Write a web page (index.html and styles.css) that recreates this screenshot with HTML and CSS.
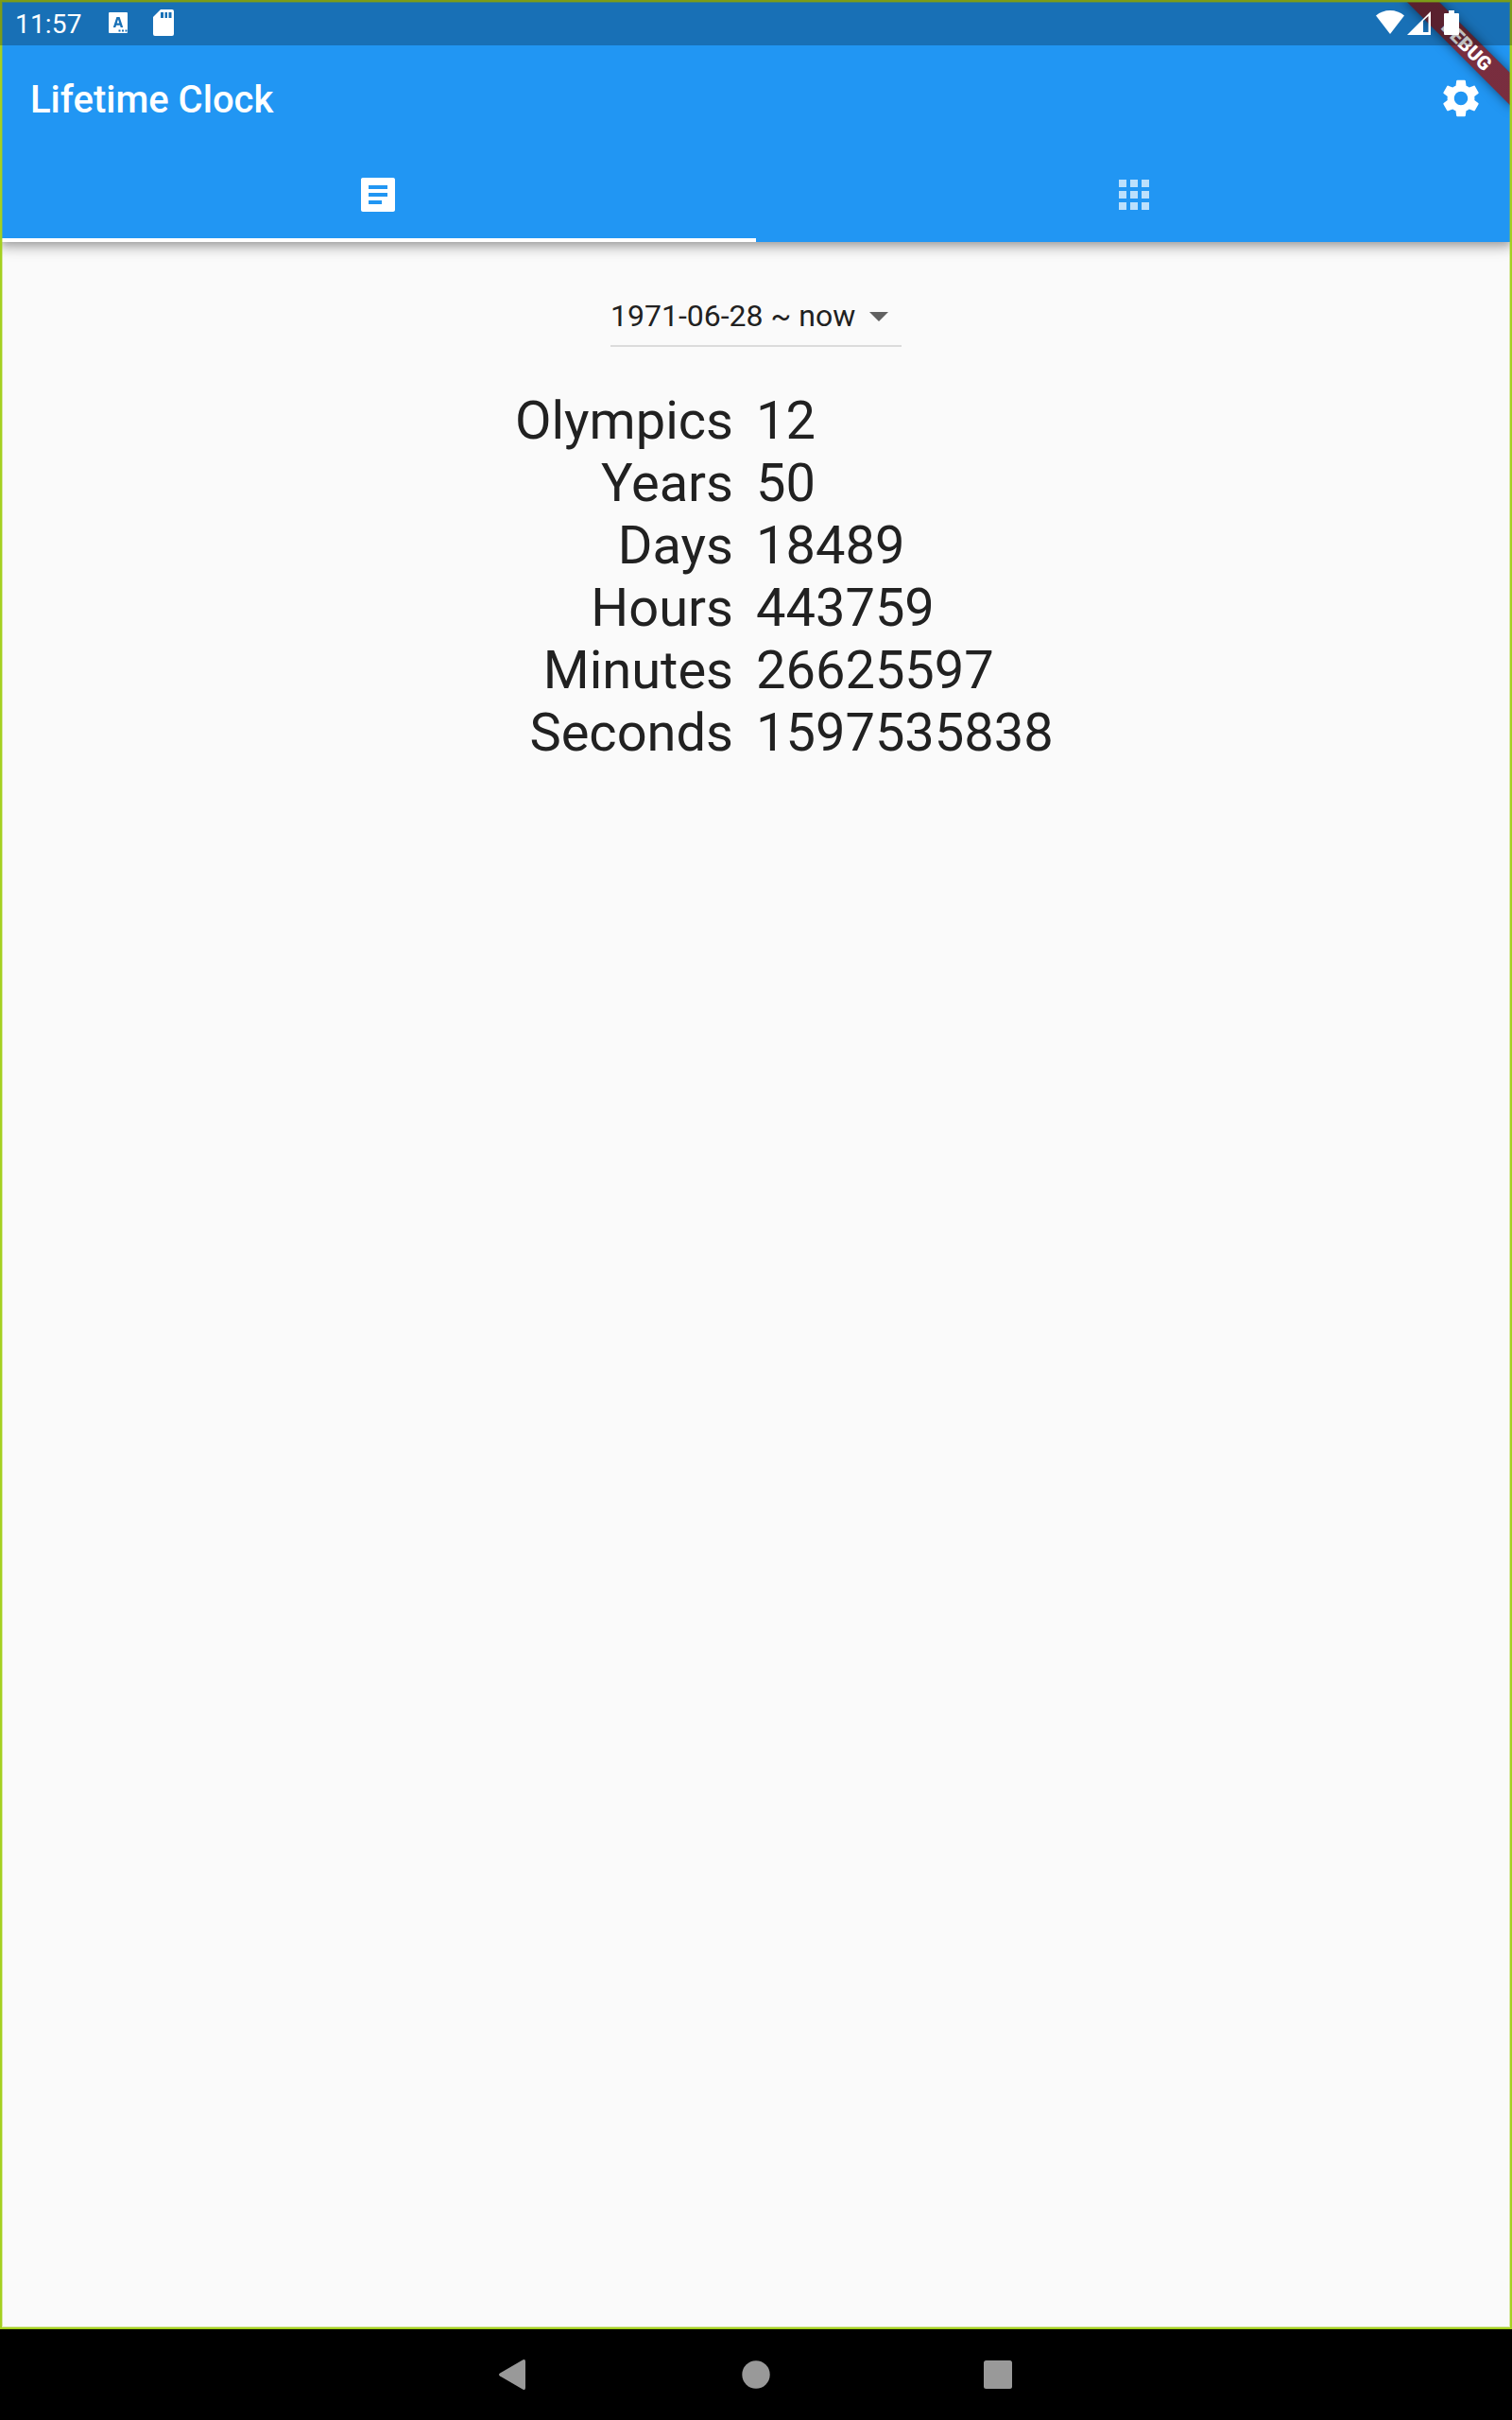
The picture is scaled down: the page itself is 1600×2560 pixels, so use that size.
FILE: index.html
```
<!DOCTYPE html>
<html lang="en">
<head>
<meta charset="utf-8">
<title>Lifetime Clock</title>
<link rel="stylesheet" href="styles.css">
</head>
<body>
<div class="screen">
  <div class="app">
    <header class="app-bar">
      <div class="toolbar">
        <h1 class="title">Lifetime Clock</h1>
        <svg class="icon" viewBox="0 0 24 24"><path d="M19.14 12.94c.04-.3.06-.61.06-.94 0-.32-.02-.64-.07-.94l2.03-1.58c.18-.14.23-.41.12-.61l-1.92-3.32c-.12-.22-.37-.29-.59-.22l-2.39.96c-.5-.38-1.03-.7-1.62-.94L14.4 2.81c-.04-.24-.24-.41-.48-.41h-3.84c-.24 0-.43.17-.47.41l-.36 2.54c-.59.24-1.13.57-1.62.94l-2.39-.96c-.22-.08-.47 0-.59.22L2.74 8.87c-.12.21-.08.47.12.61l2.03 1.58c-.05.3-.09.63-.09.94s.02.64.07.94l-2.03 1.58c-.18.14-.23.41-.12.61l1.92 3.32c.12.22.37.29.59.22l2.39-.96c.5.38 1.03.7 1.62.94l.36 2.54c.05.24.24.41.48.41h3.84c.24 0 .44-.17.47-.41l.36-2.54c.59-.24 1.13-.56 1.62-.94l2.39.96c.22.08.47 0 .59-.22l1.92-3.32c.12-.22.07-.47-.12-.61l-2.01-1.58zM12 15.6c-1.98 0-3.6-1.62-3.6-3.6s1.62-3.6 3.6-3.6 3.6 1.62 3.6 3.6-1.62 3.6-3.6 3.6z"/></svg>
      </div>
      <nav class="tabs">
        <div class="tab tab-active"><svg class="icon" viewBox="0 0 24 24"><path d="M20 3H4c-.55 0-1 .45-1 1v16c0 .55.45 1 1 1h16c.55 0 1-.45 1-1V4c0-.55-.45-1-1-1zm-6 14H7v-2h7v2zm3-4H7v-2h10v2zm0-4H7V7h10v2z"/></svg></div>
        <div class="tab"><svg class="icon" viewBox="0 0 24 24"><path d="M4 8h4V4H4v4zm6 12h4v-4h-4v4zm-6 0h4v-4H4v4zm0-6h4v-4H4v4zm6 0h4v-4h-4v4zm6-10v4h4V4h-4zm-6 4h4V4h-4v4zm6 6h4v-4h-4v4zm0 6h4v-4h-4v4z"/></svg></div>
      </nav>
    </header>
    <main class="content">
      <div class="dropdown">
        <span>1971-06-28 ~ now</span>
        <svg class="icon caret" viewBox="0 0 24 24"><path d="M7 10l5 5 5-5z"/></svg>
      </div>
      <dl class="stats">
        <dt>Olympics</dt><dd>12</dd>
        <dt>Years</dt><dd>50</dd>
        <dt>Days</dt><dd>18489</dd>
        <dt>Hours</dt><dd>443759</dd>
        <dt>Minutes</dt><dd>26625597</dd>
        <dt>Seconds</dt><dd>1597535838</dd>
      </dl>
    </main>
    <div class="banner">DEBUG</div>
    <div class="frame"></div>
    <div class="status">
      <span class="time">11:57</span>
      <svg class="keyboard" width="20" height="22" viewBox="0 0 20 22"><path fill-rule="evenodd" d="M1 0h18q1 0 1 1v20q0 1-1 1H1q-1 0-1-1V1q0-1 1-1zM8.400 5L4.800 16h2.500l.7-2.300h4l.7 2.300h2.500L11.600 5zM10 7.600l1.300 4H8.700zM10.500 18.500v2h2v-2zM14 18.500v2h2v-2zM17.500 18.500v2h2v-2z"/></svg>
      <svg class="card" width="22" height="28" viewBox="0 0 22 28"><path fill-rule="evenodd" d="M8 0h12q2 0 2 2v24q0 2-2 2H2q-2 0-2-2V8zM8 3v6h3V3zM12.500 3v6h2.500V3zM16.500 3v6h3V3z"/></svg>
      <div class="signals">
        <svg class="wifi" width="30" height="25" viewBox="0 0 30 25"><path d="M15 25L0 5.500Q6.500 0 15 0t15 5.500z"/></svg>
        <svg class="cell" width="25" height="25" viewBox="0 0 25 25"><path fill-rule="evenodd" d="M25 0v25H0zM17 10v12h5.500V5z"/></svg>
        <svg class="battery" width="16" height="26" viewBox="0 0 16 26"><path d="M5 0h6v3h4q1 0 1 1v21q0 1-1 1H1q-1 0-1-1V4q0-1 1-1h4z"/></svg>
      </div>
    </div>
  </div>
  <footer class="nav-bar">
    <svg class="back" width="28" height="32" viewBox="0 0 28 32"><path d="M25.500.3Q28-.7 28 2v28q0 2.700-2.500 1.700L1 17.500q-2-1.500 0-3z"/></svg>
    <svg class="home" width="30" height="30" viewBox="0 0 30 30"><circle cx="15" cy="15" r="14.700"/></svg>
    <svg width="30" height="30" viewBox="0 0 30 30"><rect width="30" height="30" rx="2.500"/></svg>
  </footer>
</div>
</body>
</html>
```
FILE: styles.css
```
* { box-sizing: border-box; }
body { margin: 0; font-family: Roboto, sans-serif; background: #000; }
.screen { width: 1600px; height: 2560px; display: flex; flex-direction: column; }
.app { position: relative; height: 2464px; overflow: hidden; background: #fafafa; display: flex; flex-direction: column; }
.app-bar {
  height: 256px; padding-top: 48px; background: #2196f3; color: #fff;
  box-shadow: 0 4px 8px -2px rgba(0,0,0,.2), 0 8px 10px rgba(0,0,0,.14), 0 2px 20px rgba(0,0,0,.12);
}
.icon { display: block; flex: none; width: 48px; height: 48px; fill: currentColor; }
.toolbar { height: 112px; padding: 0 30px 0 32px; display: flex; align-items: center; justify-content: space-between; }
.title { margin: 0; padding-top: 3px; font-size: 40px; font-weight: 500; line-height: 48px; }
.tabs { height: 96px; display: flex; }
.tab { flex: 1; padding-top: 22px; display: flex; justify-content: center; color: rgba(255,255,255,.7); }
.tab-active { color: #fff; border-bottom: 4px solid #fff; }
.content { padding-top: 32px; display: flex; flex-direction: column; align-items: center; color: #212121; }
.dropdown { width: 308px; height: 79px; padding-top: 12px; border-bottom: 2px solid #dbdbdb; display: flex; justify-content: space-between; font-size: 32px; line-height: 70px; white-space: nowrap; }
.dropdown span { margin-top: -1px; }
.dropdown .caret { color: #616161; margin-top: 10px; }
.stats { width: 100%; margin: 45px 0 0; display: grid; grid-template-columns: 1fr 1fr; font-size: 56px; line-height: 66px; }
.stats dt { padding-right: 24px; text-align: right; }
.stats dd { margin: 0; }
.banner {
  position: absolute; left: 1520px; top: 56px; width: 160px; height: 24px;
  transform: rotate(45deg); transform-origin: 80px -56px;
  background: linear-gradient(rgba(183,28,28,.627), rgba(183,28,28,.627)), rgba(0,0,0,.5);
  box-shadow: 0 0 12px rgba(0,0,0,.5);
  color: #fff; font-size: 20.4px; font-weight: 900; line-height: 24px; text-align: center;
}
.frame { position: absolute; inset: 0; border: 2px solid #a4d020; box-shadow: inset 0 0 0 1px rgba(164,208,32,.4); }
.status { position: absolute; left: 0; top: 0; width: 1600px; height: 48px; padding-left: 16px; display: flex; background: rgba(0,0,0,.25); color: #fff; fill: #fff; }
.time { width: 99px; font-size: 28px; line-height: 51px; letter-spacing: .2px; }
.keyboard { margin-top: 13px; }
.card { margin: 10px 0 0 27px; }
.signals { margin-left: auto; padding-right: 56px; display: flex; }
.wifi { margin-top: 11px; }
.cell { margin: 12px 14px 0 3px; }
.battery { margin-top: 11px; }
.nav-bar { height: 96px; padding-left: 528px; display: flex; align-items: center; background: #000; fill: #999; }
.back { margin-right: 229px; }
.home { margin-right: 226px; }
```
